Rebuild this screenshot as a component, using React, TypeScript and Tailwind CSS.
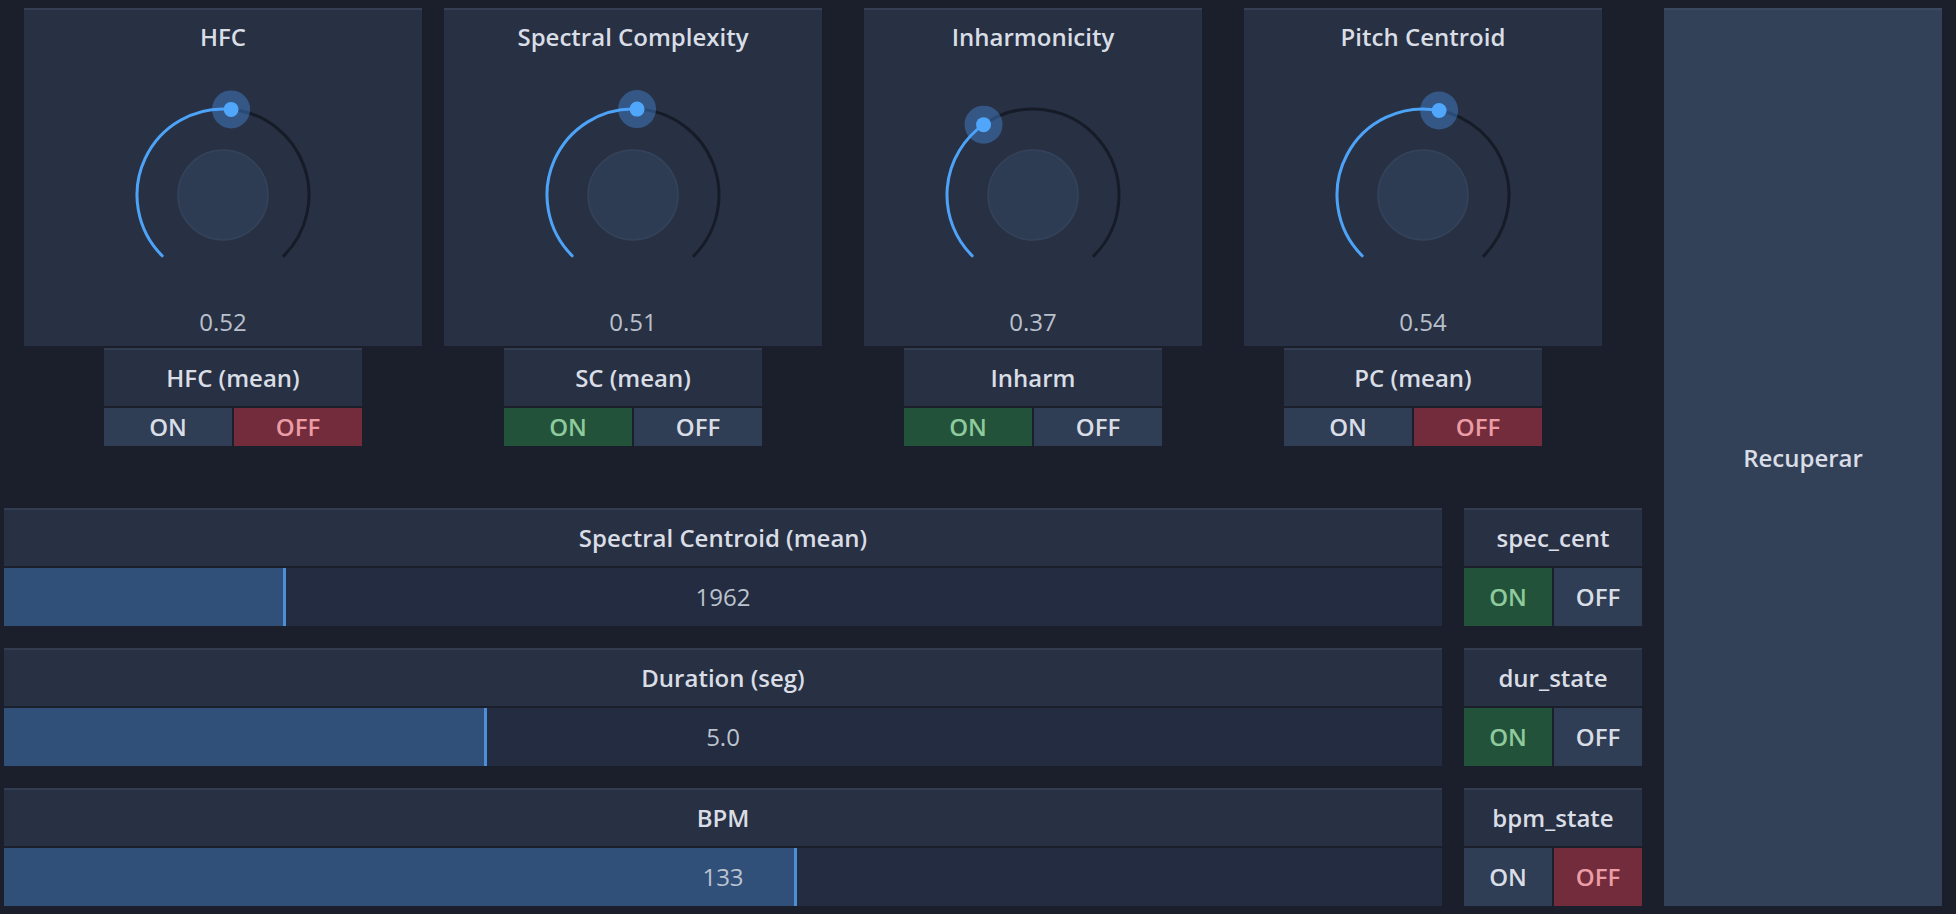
import React from "react";

type KnobProps = { value: number };

const R = 86;
const C = 110;

const polar = (deg: number) => {
  const rad = (deg * Math.PI) / 180;
  return [C + R * Math.sin(rad), C - R * Math.cos(rad)];
};

const arc = (a0: number, a1: number) => {
  const [x0, y0] = polar(a0);
  const [x1, y1] = polar(a1);
  const large = a1 - a0 > 180 ? 1 : 0;
  return `M ${x0} ${y0} A ${R} ${R} 0 ${large} 1 ${x1} ${y1}`;
};

const Knob = ({ value }: KnobProps) => {
  const angle = -135 + value * 270;
  const [tx, ty] = polar(angle);
  return (
    <svg width="220" height="220" viewBox="0 0 220 220" className="mt-[32px]">
      <path d={arc(angle, 135)} stroke="#161c27" strokeWidth="3" fill="none" strokeLinecap="round" />
      <path d={arc(-135, angle)} stroke="#4da3f7" strokeWidth="3" fill="none" strokeLinecap="round" />
      <circle cx={C} cy={C} r="45" fill="#2e3c53" stroke="#34435b" strokeWidth="1.5" />
      <circle cx={tx} cy={ty} r="19" fill="#4a9eff" fillOpacity="0.36" />
      <circle cx={tx} cy={ty} r="7.5" fill="#4fa6fb" />
    </svg>
  );
};

type ToggleProps = { on: boolean | null; left: string };

// on === true -> ON green, on === false -> OFF red
const Toggle = ({ on }: { on: boolean }) => (
  <div className="flex gap-[2px] mt-[2px]">
    <div
      className={`flex-1 h-[38px] flex items-center justify-center ${
        on ? "bg-[#22533a] text-[#8fc99c]" : "bg-[#2f3d55] text-[#d9dde5]"
      }`}
    >
      ON
    </div>
    <div
      className={`flex-1 h-[38px] flex items-center justify-center ${
        on ? "bg-[#2f3d55] text-[#d9dde5]" : "bg-[#722c3c] text-[#eb9ca5]"
      }`}
    >
      OFF
    </div>
  </div>
);

const knobs = [
  { title: "HFC", value: 0.52, label: "HFC (mean)", on: false, col: "ml-[20px] w-[398px]", box: "ml-[80px]" },
  { title: "Spectral Complexity", value: 0.51, label: "SC (mean)", on: true, col: "ml-[22px] w-[378px]", box: "ml-[60px]" },
  { title: "Inharmonicity", value: 0.37, label: "Inharm", on: true, col: "ml-[42px] w-[338px]", box: "ml-[40px]" },
  { title: "Pitch Centroid", value: 0.54, label: "PC (mean)", on: false, col: "ml-[42px] w-[358px]", box: "ml-[40px]" },
];

const sliders = [
  { title: "Spectral Centroid (mean)", value: "1962", fill: 282, label: "spec_cent", on: true },
  { title: "Duration (seg)", value: "5.0", fill: 483, label: "dur_state", on: true },
  { title: "BPM", value: "133", fill: 793, label: "bpm_state", on: false },
];

export default function App() {
  return (
    <div
      className="w-[1956px] h-[914px] bg-[#1a1f2b] text-[#d9dde5] text-[24px] font-semibold pl-[4px] pt-[8px] flex gap-[22px] overflow-hidden"
      style={{ fontFamily: '"Open Sans", "Noto Sans", sans-serif' }}
    >
      <div className="w-[1638px] flex flex-col">
        {/* knob row */}
        <div className="flex h-[438px]">
          {knobs.map((k) => (
            <div key={k.title} className={`flex flex-col ${k.col}`}>
              <div className="h-[338px] bg-[#283043] border-t-2 border-[#343f55] flex flex-col items-center">
                <div className="mt-[11px] leading-[32px]">{k.title}</div>
                <Knob value={k.value} />
                <div className="mt-[1px] leading-[32px] font-normal text-[#b9c0cc]">{k.value.toFixed(2)}</div>
              </div>
              <div className={`w-[258px] mt-[2px] ${k.box}`}>
                <div className="h-[58px] bg-[#283043] border-t-2 border-[#323d52] flex items-center justify-center">
                  {k.label}
                </div>
                <Toggle on={k.on} />
              </div>
            </div>
          ))}
        </div>

        {/* slider rows */}
        <div className="mt-[62px] flex flex-col gap-[22px]">
          {sliders.map((s) => (
            <div key={s.title} className="flex gap-[22px]">
              <div className="w-[1438px] flex flex-col gap-[2px]">
                <div className="h-[58px] bg-[#283043] border-t-2 border-[#323d52] flex items-center justify-center">
                  {s.title}
                </div>
                <div className="relative h-[58px] bg-[#232c40]">
                  <div
                    className="absolute left-0 top-0 bottom-0 bg-[#30507a] border-r-[3px] border-[#4a8fd8]"
                    style={{ width: s.fill }}
                  />
                  <div className="absolute inset-0 flex items-center justify-center font-normal text-[#bcc3ce]">
                    {s.value}
                  </div>
                </div>
              </div>
              <div className="w-[178px]">
                <div className="h-[58px] bg-[#283043] border-t-2 border-[#323d52] flex items-center justify-center">
                  {s.label}
                </div>
                <div className="flex gap-[2px] mt-[2px]">
                  <div
                    className={`flex-1 h-[58px] flex items-center justify-center ${
                      s.on ? "bg-[#22533a] text-[#8fc99c]" : "bg-[#2f3d55] text-[#d9dde5]"
                    }`}
                  >
                    ON
                  </div>
                  <div
                    className={`flex-1 h-[58px] flex items-center justify-center ${
                      s.on ? "bg-[#2f3d55] text-[#d9dde5]" : "bg-[#722c3c] text-[#eb9ca5]"
                    }`}
                  >
                    OFF
                  </div>
                </div>
              </div>
            </div>
          ))}
        </div>
      </div>

      <div className="w-[278px] h-[898px] bg-[#324058] border-t-2 border-[#3a4862] flex items-center justify-center">
        Recuperar
      </div>
    </div>
  );
}
